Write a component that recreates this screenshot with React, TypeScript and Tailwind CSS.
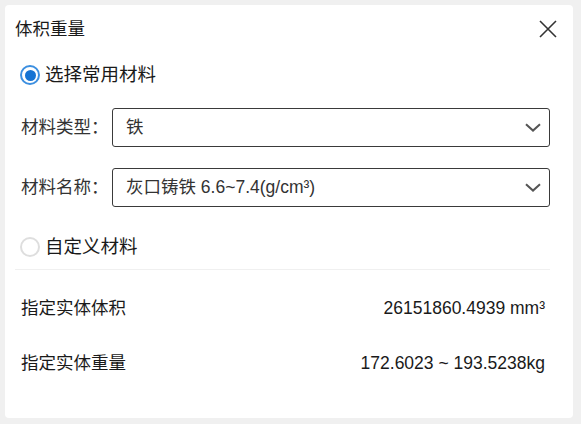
import { useState } from "react";

const font = { fontFamily: '"Liberation Sans", "Noto Sans CJK SC", sans-serif' };

function Radio(props: { checked: boolean; label: string; onClick: () => void; className?: string }) {
  return (
    <div
      onClick={props.onClick}
      className={"flex items-center h-[24px] pl-[15px] gap-[5px] cursor-pointer " + (props.className ?? "")}
    >
      {props.checked ? (
        <span className="w-[20px] h-[20px] rounded-full border-[2px] border-[#3c8fe0] flex items-center justify-center">
          <span className="w-[11px] h-[11px] rounded-full bg-[#1673d3]" />
        </span>
      ) : (
        <span className="w-[20px] h-[20px] rounded-full border-[2px] border-[#dedede]" />
      )}
      <span className="text-[18.5px] text-[#1a1a1a]">{props.label}</span>
    </div>
  );
}

function Select(props: { label: string; value: string; className?: string }) {
  return (
    <div className={"flex items-center h-[39px] pl-[16px] " + (props.className ?? "")}>
      <span className="w-[91px] text-[17.5px] text-[#333]">{props.label}</span>
      <div className="w-[438px] h-[39px] border border-[#3a3a3a] rounded-[3px] flex items-center justify-between pl-[13px] pr-[8px]">
        <span className="text-[17.5px] text-[#333]">{props.value}</span>
        <svg width="16" height="9" viewBox="0 0 16 9" fill="none">
          <path d="M1 1.2 L8 7.6 L15 1.2" stroke="#555" strokeWidth="2" />
        </svg>
      </div>
    </div>
  );
}

export default function App() {
  const [mode, setMode] = useState("common");

  return (
    <div className="w-[581px] h-[424px] bg-[#f0f0f0] p-[5px]" style={font}>
      <div className="w-[568px] h-[413px] bg-white rounded-[4px] flex flex-col">
        <div className="flex items-center justify-between h-[22px] mt-[13px] pl-[10px] pr-[16px]">
          <span className="text-[17.5px] text-[#1a1a1a]">体积重量</span>
          <svg width="18" height="18" viewBox="0 0 18 18" fill="none">
            <path d="M1 1 L17 17 M17 1 L1 17" stroke="#333" strokeWidth="1.6" />
          </svg>
        </div>

        <Radio
          className="mt-[23px]"
          checked={mode === "common"}
          label="选择常用材料"
          onClick={() => setMode("common")}
        />

        <Select className="mt-[21px]" label="材料类型：" value="铁" />
        <Select className="mt-[21px]" label="材料名称：" value="灰口铸铁 6.6~7.4(g/cm³)" />

        <Radio
          className="mt-[28px]"
          checked={mode === "custom"}
          label="自定义材料"
          onClick={() => setMode("custom")}
        />

        <div className="mt-[10px] ml-[10px] w-[535px] h-[1px] bg-[#f0f0f0]" />

        <div className="flex items-center justify-between h-[24px] mt-[26px] pl-[16px] pr-[28px] text-[17.5px] text-[#1a1a1a]">
          <span>指定实体体积</span>
          <span>26151860.4939 mm³</span>
        </div>
        <div className="flex items-center justify-between h-[24px] mt-[31px] pl-[16px] pr-[28px] text-[17.5px] text-[#1a1a1a]">
          <span>指定实体重量</span>
          <span>172.6023 ~ 193.5238kg</span>
        </div>
      </div>
    </div>
  );
}
